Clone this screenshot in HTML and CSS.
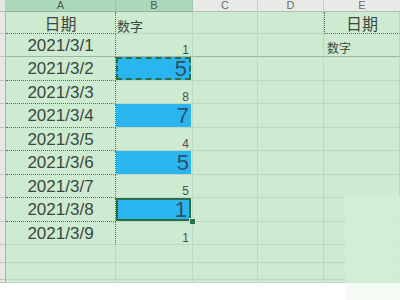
FILE: index.html
```html
<!DOCTYPE html>
<html>
<head>
<meta charset="utf-8">
<link rel="stylesheet" href="styles.css">
</head>
<body>
<div class="sheet">
  <div class="hd corner"></div>
  <div class="hd sel">A</div>
  <div class="hd sel">B</div>
  <div class="hd">C</div>
  <div class="hd">D</div>
  <div class="hd last">E</div>

  <div class="rh"></div>
  <div class="c a dot title">日期</div>
  <div class="c b lbl">数字</div>
  <div class="c"></div>
  <div class="c"></div>
  <div class="c e1 title">日期</div>

  <div class="rh"></div>
  <div class="c a solid date">2021/3/1</div>
  <div class="c b solid num">1</div>
  <div class="c solid"></div>
  <div class="c solid"></div>
  <div class="c solid lbl2">数字</div>

  <div class="rh"></div>
  <div class="c a dot date">2021/3/2</div>
  <div class="c b"><div class="blue big copy">5</div></div>
  <div class="c"></div>
  <div class="c"></div>
  <div class="c"></div>

  <div class="rh"></div>
  <div class="c a dot date">2021/3/3</div>
  <div class="c b num">8</div>
  <div class="c"></div>
  <div class="c"></div>
  <div class="c"></div>

  <div class="rh"></div>
  <div class="c a dot date">2021/3/4</div>
  <div class="c b"><div class="blue big">7</div></div>
  <div class="c"></div>
  <div class="c"></div>
  <div class="c"></div>

  <div class="rh"></div>
  <div class="c a dot date">2021/3/5</div>
  <div class="c b num">4</div>
  <div class="c"></div>
  <div class="c"></div>
  <div class="c"></div>

  <div class="rh"></div>
  <div class="c a dot date">2021/3/6</div>
  <div class="c b"><div class="blue big">5</div></div>
  <div class="c"></div>
  <div class="c"></div>
  <div class="c"></div>

  <div class="rh"></div>
  <div class="c a dot date">2021/3/7</div>
  <div class="c b num">5</div>
  <div class="c"></div>
  <div class="c"></div>
  <div class="c"></div>

  <div class="rh"></div>
  <div class="c a dot date">2021/3/8</div>
  <div class="c b"><div class="blue big active">1</div></div>
  <div class="c"></div>
  <div class="c"></div>
  <div class="c"></div>

  <div class="rh"></div>
  <div class="c a date">2021/3/9</div>
  <div class="c b num">1</div>
  <div class="c"></div>
  <div class="c"></div>
  <div class="c"></div>

  <div class="rh"></div>
  <div class="c a plain"></div>
  <div class="c b"></div>
  <div class="c"></div>
  <div class="c"></div>
  <div class="c"></div>

  <div class="rh"></div>
  <div class="c a plain"></div>
  <div class="c b"></div>
  <div class="c"></div>
  <div class="c"></div>
  <div class="c"></div>

  <div class="rh"></div>
  <div class="c a plain"></div>
  <div class="c b"></div>
  <div class="c"></div>
  <div class="c"></div>
  <div class="c"></div>
</div>
<div class="patch"></div>
<div class="foot"></div>
</body>
</html>
```

FILE: styles.css
```css
html, body {
  margin: 0;
  padding: 0;
  width: 400px;
  height: 300px;
  overflow: hidden;
  background: #ffffff;
  font-family: "Liberation Sans", "Noto Sans CJK SC", sans-serif;
}

.sheet {
  display: grid;
  grid-template-columns: 6px 110px 77px 65px 66px 76px;
  grid-template-rows: 12px 22px 23px 24px 23px 24px 23px 24px 23px 24px 23px 18px 17px 3px;
  background: #cdebd1;
  width: 400px;
}

.hd {
  box-sizing: border-box;
  background: #e8eae8;
  border-right: 1px solid #c9cbc9;
  border-bottom: 1px solid #b9bcb9;
  color: #6a6a6a;
  font-size: 11px;
  line-height: 11px;
  text-align: center;
  overflow: hidden;
}

.hd.corner {
  background: #e4e6e4;
}

.hd.sel {
  background: #acd8b9;
  color: #4a5a4e;
  border-right-color: #9dc5a8;
  border-bottom-color: #8ab796;
}

.hd.last {
  border-right: none;
}

.rh {
  box-sizing: border-box;
  background: #e6e8e6;
  border-bottom: 1px solid #c0c4c0;
  border-right: 1px solid #a9b0a9;
}

.c {
  box-sizing: border-box;
  border-right: 1px solid #bed6c2;
  border-bottom: 1px solid #bed6c2;
  color: #3e4640;
  overflow: hidden;
  position: relative;
}

.c.a {
  border-right: 1px dotted #5f6a62;
}

.c.a.plain {
  border-right: 1px solid #bed6c2;
}

.c.dot {
  border-bottom: 1px dotted #5f6a62;
}

.c.solid {
  border-bottom: 1px solid #a3b0a6;
}

.c.b {
  border-right: 1px solid #c4d6c6;
}

.title {
  font-family: "Noto Sans CJK SC", sans-serif;
  font-size: 16px;
  line-height: 20px;
  text-align: center;
  padding-top: 1px;
}

.lbl {
  font-family: "Noto Sans CJK SC", sans-serif;
  font-size: 13px;
  line-height: 15px;
  padding: 6px 0 0 1px;
}

.lbl2 {
  font-family: "Noto Sans CJK SC", sans-serif;
  font-size: 12px;
  line-height: 14px;
  padding: 7px 0 0 3px;
}

.e1 {
  border-left: 1px dotted #5f6a62;
  border-bottom: 1px dotted #5f6a62;
}

.date {
  font-size: 17px;
  line-height: 22px;
  text-align: center;
  padding-top: 1px;
}

.num {
  font-size: 12px;
  line-height: 12px;
  text-align: right;
  padding: 10px 3px 0 0;
  color: #4a524c;
}

.blue {
  box-sizing: border-box;
  background: #2bb5ef;
  height: 100%;
  width: 75px;
  text-align: right;
  padding-right: 2px;
}

.big {
  font-size: 22px;
  line-height: 24px;
  color: #2f4f6a;
}

.copy {
  border: 2px dashed #2c6f4d;
  line-height: 20px;
}

.active {
  border: 2px solid #2b6f47;
  line-height: 20px;
}

.c.b:has(.active) {
  overflow: visible;
  z-index: 2;
}

.active::after {
  content: "";
  position: absolute;
  right: -4px;
  bottom: -4px;
  width: 5px;
  height: 5px;
  background: #2b6f47;
  border: 1px solid #cdebd1;
}

.patch {
  position: absolute;
  left: 345px;
  top: 195px;
  width: 55px;
  height: 88px;
  background: #d4eed8;
  opacity: 0.85;
}

.foot {
  position: absolute;
  left: 345px;
  top: 283px;
  width: 55px;
  height: 17px;
  background: #f4faf4;
}
```
